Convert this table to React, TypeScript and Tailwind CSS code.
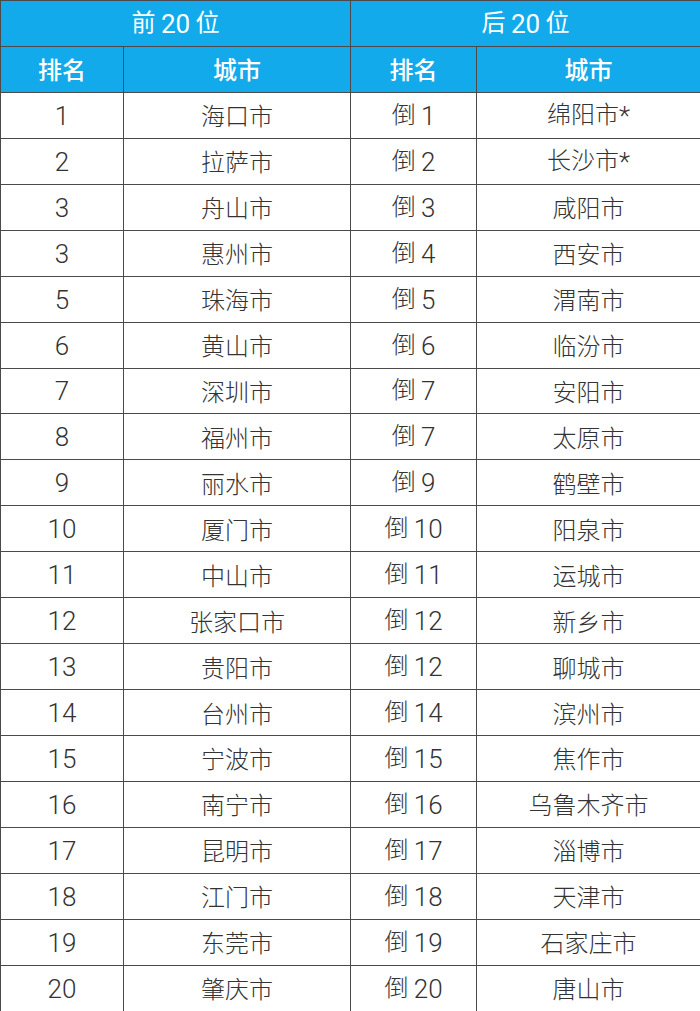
const top = [
  "海口市", "拉萨市", "舟山市", "惠州市", "珠海市", "黄山市", "深圳市", "福州市", "丽水市", "厦门市",
  "中山市", "张家口市", "贵阳市", "台州市", "宁波市", "南宁市", "昆明市", "江门市", "东莞市", "肇庆市",
];
const topRank = ["1", "2", "3", "3", "5", "6", "7", "8", "9", "10", "11", "12", "13", "14", "15", "16", "17", "18", "19", "20"];

const bottom = [
  "绵阳市", "长沙市", "咸阳市", "西安市", "渭南市", "临汾市", "安阳市", "太原市", "鹤壁市", "阳泉市",
  "运城市", "新乡市", "聊城市", "滨州市", "焦作市", "乌鲁木齐市", "淄博市", "天津市", "石家庄市", "唐山市",
];
const bottomRank = ["1", "2", "3", "4", "5", "6", "7", "7", "9", "10", "11", "12", "12", "14", "15", "16", "17", "18", "19", "20"];

const cell = "border border-[#4a4a4a] h-[45.95px] p-0 text-center align-middle";
const head = `${cell} text-white text-[24px]`;
const num = "font-['Roboto',sans-serif] font-light text-[26px] align-[-2px]";

export default function App() {
  return (
    <div className="w-[700px] bg-white" style={{ fontFamily: '"Noto Sans CJK SC", "Noto Sans", sans-serif' }}>
      <table className="w-[700px] table-fixed border-collapse">
        <colgroup>
          <col className="w-[123px]" />
          <col className="w-[227px]" />
          <col className="w-[126px]" />
          <col className="w-[224px]" />
        </colgroup>
        <thead className="bg-[#12aaeb]">
          <tr>
            <th colSpan={2} className={`${head} font-normal`}>前 <span className="font-['Roboto',sans-serif] font-normal text-[26px] align-[-2px]">20</span> 位</th>
            <th colSpan={2} className={`${head} font-normal`}>后 <span className="font-['Roboto',sans-serif] font-normal text-[26px] align-[-2px]">20</span> 位</th>
          </tr>
          <tr>
            <th className={`${head} font-medium`}>排名</th>
            <th className={`${head} font-medium`}>城市</th>
            <th className={`${head} font-medium`}>排名</th>
            <th className={`${head} font-medium`}>城市</th>
          </tr>
        </thead>
        <tbody className="text-[24px] font-light text-[#333333]">
          {top.map((city, i) => (
            <tr key={i}>
              <td className={cell}><span className={num}>{topRank[i]}</span></td>
              <td className={cell}>{city}</td>
              <td className={cell}>倒 <span className={num}>{bottomRank[i]}</span></td>
              <td className={cell}>
                {bottom[i]}
                {i < 2 && <span className={num}>*</span>}
              </td>
            </tr>
          ))}
        </tbody>
      </table>
    </div>
  );
}
